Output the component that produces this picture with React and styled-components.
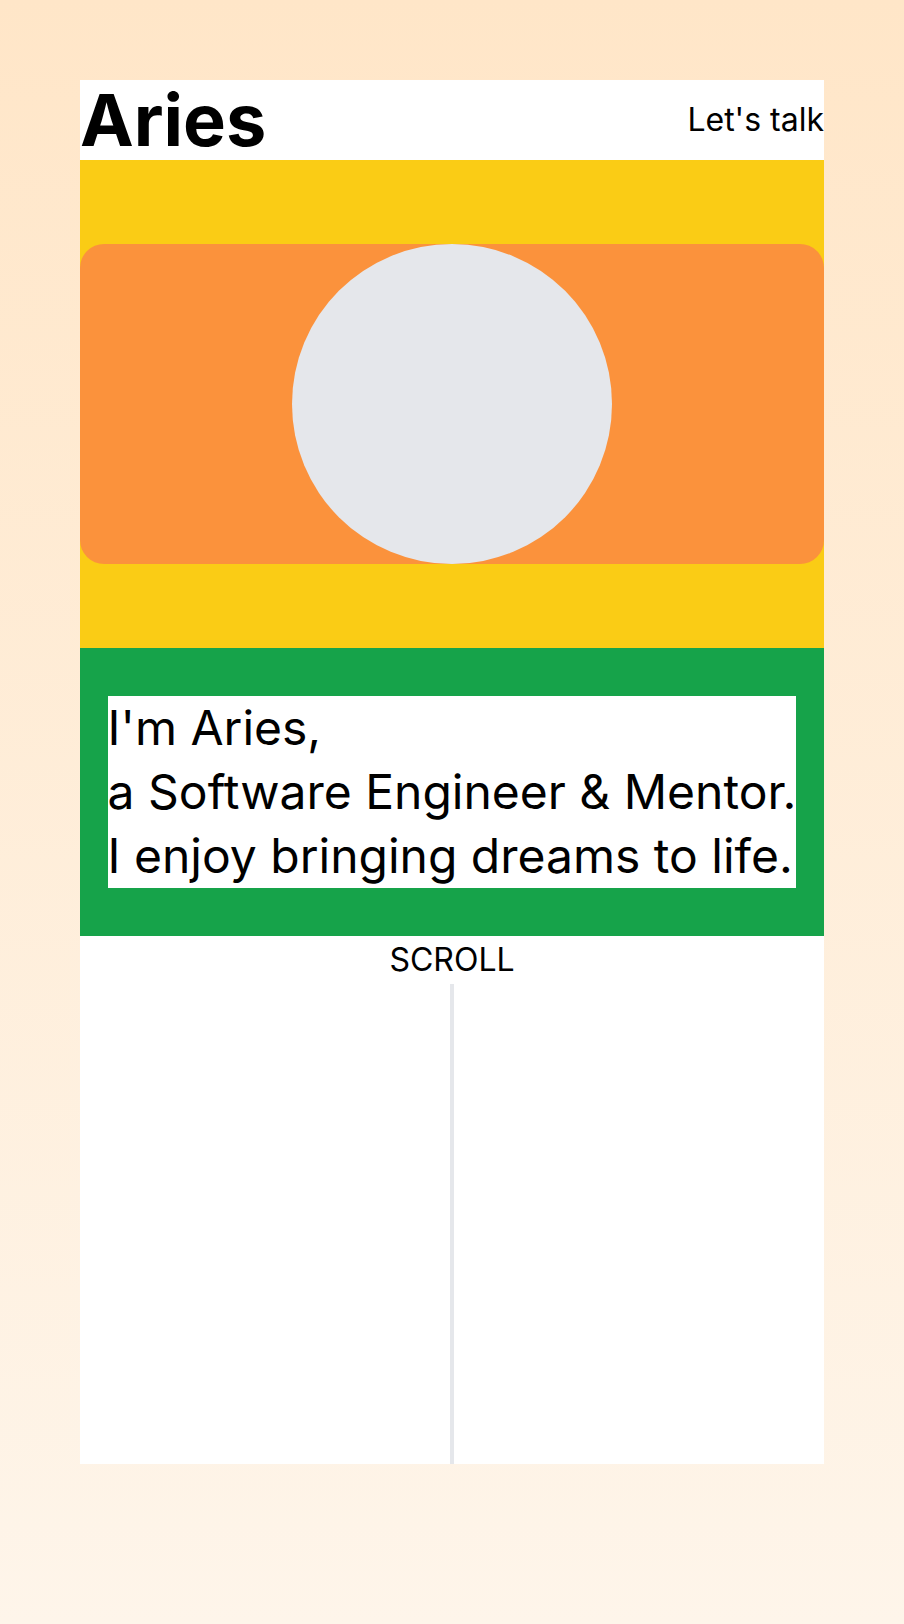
import React from "react";
import styled, { createGlobalStyle } from "styled-components";

const Global = createGlobalStyle`
  html, body { margin: 0; padding: 0; }
  body {
    min-height: 100vh;
    background: linear-gradient(to bottom, #ffe6c8, #fef5ea);
    font-family: Inter, "Noto Sans", sans-serif;
    color: #000;
  }
`;

const Page = styled.div`
  padding: 80px;
`;

const Frame = styled.main`
  background: #fff;
  display: flex;
  flex-direction: column;
`;

const Header = styled.header`
  height: 80px;
  display: flex;
  align-items: center;
  justify-content: space-between;
`;

const Logo = styled.h1`
  margin: 0;
  font-size: 72px;
  line-height: 72px;
  font-weight: 700;
`;

const TalkLink = styled.a`
  font-size: 32px;
  line-height: 48px;
  color: #000;
  text-decoration: none;
`;

const HeroBand = styled.section`
  background: #facc15;
  padding: 84px 0;
`;

const HeroCard = styled.div`
  height: 320px;
  background: #fb923c;
  border-radius: 24px;
  display: flex;
  justify-content: center;
`;

const Avatar = styled.div`
  width: 320px;
  height: 320px;
  border-radius: 50%;
  background: #e5e7eb;
`;

const IntroBand = styled.section`
  background: #16a34a;
  padding: 48px 0;
  display: flex;
  justify-content: center;
`;

const IntroText = styled.p`
  margin: 0;
  background: #fff;
  font-size: 48px;
  line-height: 64px;
`;

const ScrollArea = styled.div`
  display: flex;
  flex-direction: column;
  align-items: center;
`;

const ScrollLabel = styled.span`
  font-size: 32px;
  line-height: 48px;
`;

const ScrollLine = styled.div`
  width: 4px;
  height: 480px;
  background: #e5e7eb;
`;

export default function App() {
  return (
    <>
      <Global />
      <Page>
        <Frame>
          <Header>
            <Logo>Aries</Logo>
            <TalkLink href="#">Let's talk</TalkLink>
          </Header>
          <HeroBand>
            <HeroCard>
              <Avatar />
            </HeroCard>
          </HeroBand>
          <IntroBand>
            <IntroText>
              I'm Aries,
              <br />
              a Software Engineer &amp; Mentor.
              <br />
              I enjoy bringing dreams to life.
            </IntroText>
          </IntroBand>
          <ScrollArea>
            <ScrollLabel>SCROLL</ScrollLabel>
            <ScrollLine />
          </ScrollArea>
        </Frame>
      </Page>
    </>
  );
}
